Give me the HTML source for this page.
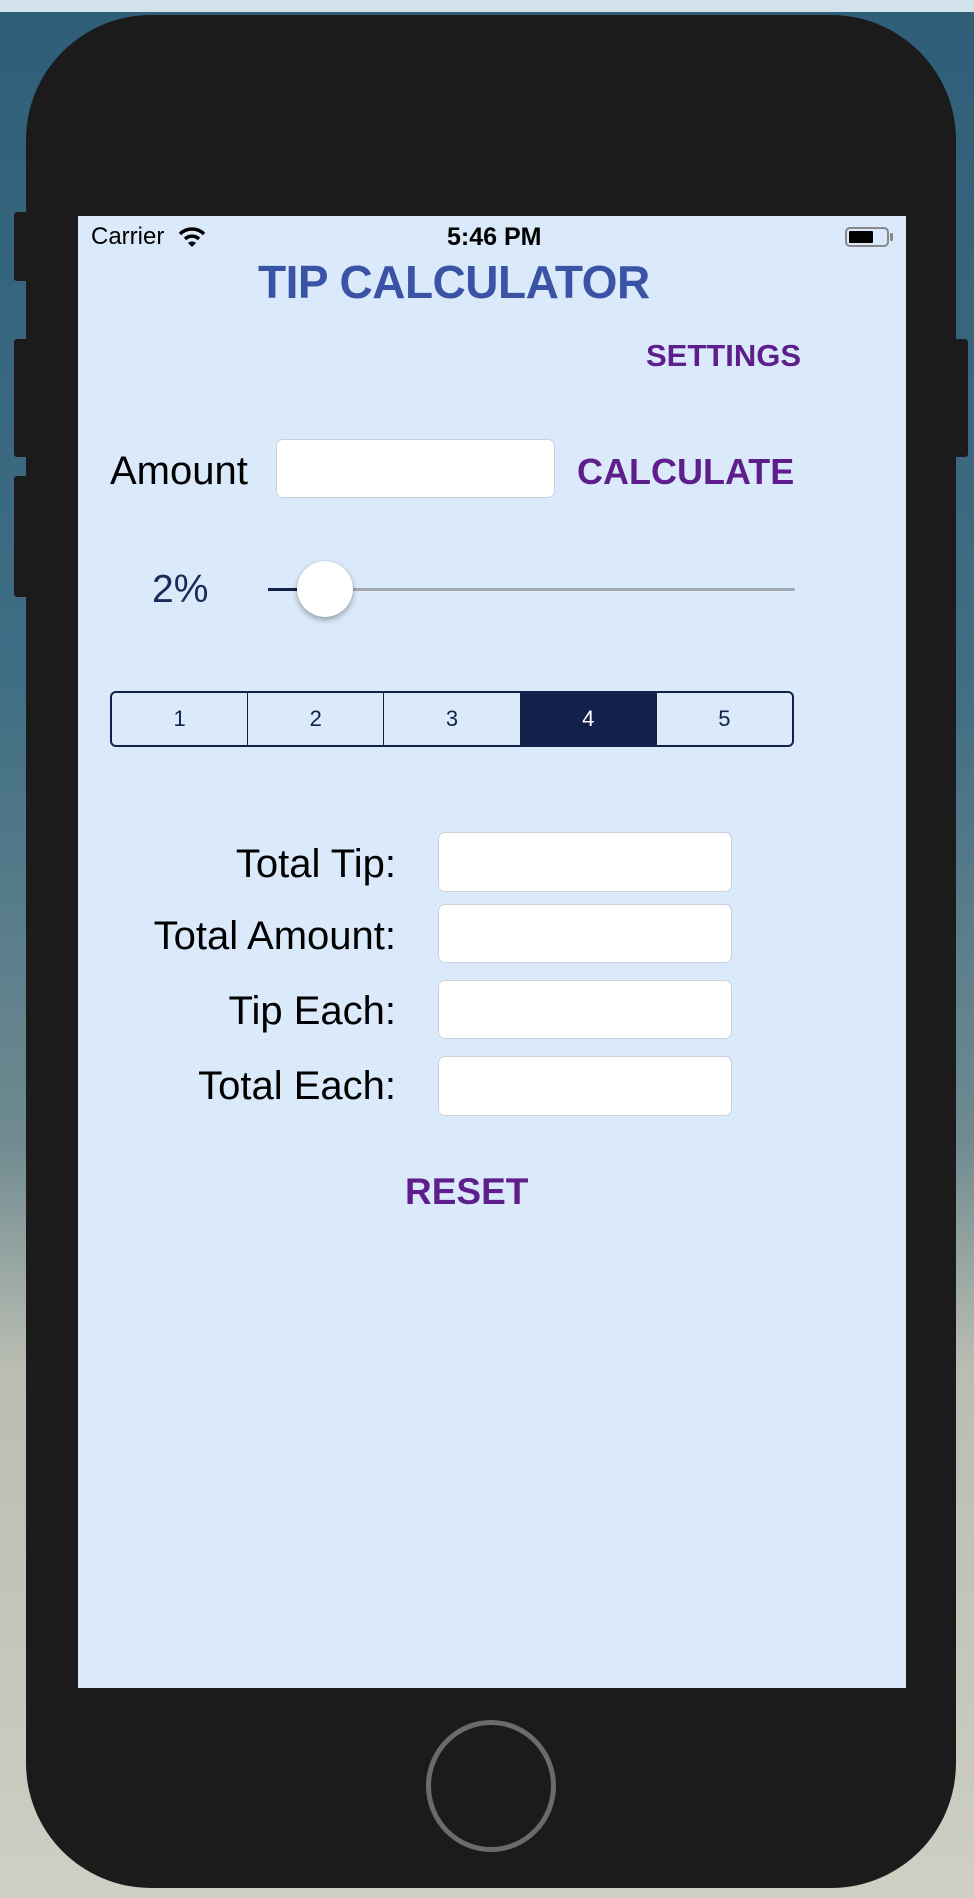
<!DOCTYPE html>
<html><head><meta charset="utf-8"><style>
*{margin:0;padding:0;box-sizing:border-box}
body{width:974px;height:1898px;position:relative;overflow:hidden;font-family:"Liberation Sans",sans-serif;
background:linear-gradient(180deg,#2f5f78 0%,#3e6d84 35%,#6f8a90 60%,#b9bdb2 72%,#cfcfc4 100%)}
.strip{position:absolute;left:0;top:0;width:974px;height:12px;background:#d2e2ea}
.phone{position:absolute;left:26px;top:15px;width:930px;height:1873px;background:#1b1b1b;border-radius:125px}
.btn{position:absolute;background:#1b1b1b;border-radius:3px}
.screen{position:absolute;left:78px;top:216px;width:828px;height:1472px;background:#daeafa}
.t{position:absolute;white-space:nowrap;line-height:1}
.field{position:absolute;background:#fff;border:1px solid #c9d2dc;border-radius:7px}
.lbl{position:absolute;right:510px;font-size:40px;color:#000;line-height:1;white-space:nowrap}
.seg{position:absolute;left:32px;top:475px;width:684px;height:56px;border:2px solid #13214a;border-radius:6px;display:flex;overflow:hidden}
.seg div{flex:1;border-right:1.5px solid #13214a;display:flex;align-items:center;justify-content:center;font-size:22px;color:#13214a}
.seg div:last-child{border-right:none}
.seg .on{background:#13214a;color:#fff}
</style></head><body>
<div class="strip"></div>
<div class="btn" style="left:14px;top:212px;width:14px;height:69px"></div>
<div class="btn" style="left:14px;top:339px;width:14px;height:118px"></div>
<div class="btn" style="left:14px;top:476px;width:14px;height:121px"></div>
<div class="btn" style="left:954px;top:339px;width:14px;height:118px"></div>
<div class="phone"></div>
<div style="position:absolute;left:426px;top:1720px;width:130px;height:132px;border:5px solid #6b6b6b;border-radius:50%"></div>
<div class="screen">
  <div class="t" style="left:13px;top:9px;font-size:24px;color:#000">Carrier</div>
  <svg style="position:absolute;left:100px;top:10px" width="28" height="22" viewBox="0 0 28 22"><path d="M2 8 A17 17 0 0 1 26 8" stroke="#000" stroke-width="3.5" fill="none"/><path d="M7 13 A10 10 0 0 1 21 13" stroke="#000" stroke-width="3.5" fill="none"/><path d="M10 17 L14 21 L18 17 A6 6 0 0 0 10 17Z" fill="#000"/></svg>
  <div class="t" style="left:369px;top:9px;font-size:25px;font-weight:bold;color:#000">5:46 PM</div>
  <div style="position:absolute;left:767px;top:11px;width:44px;height:20px;border:2px solid #888;border-radius:5px;padding:2px"><div style="width:24px;height:12px;background:#000;border-radius:1px"></div></div>
  <div style="position:absolute;left:812px;top:17px;width:3px;height:8px;background:#888;border-radius:1px"></div>
  <div class="t" style="left:180px;top:43px;font-size:46px;font-weight:bold;color:#3a53a4;letter-spacing:-0.5px">TIP CALCULATOR</div>
  <div class="t" style="left:568px;top:124px;font-size:31px;font-weight:bold;color:#5e1f8c">SETTINGS</div>
  <div class="t" style="left:32px;top:235px;font-size:40px;color:#000">Amount</div>
  <div class="field" style="left:198px;top:223px;width:279px;height:59px"></div>
  <div class="t" style="left:499px;top:238px;font-size:36px;font-weight:bold;color:#5e1f8c">CALCULATE</div>
  <div class="t" style="left:74px;top:354px;font-size:39px;color:#1a2a5a">2%</div>
  <div style="position:absolute;left:190px;top:372px;width:527px;height:3px;background:#a4a8b0;border-radius:2px"></div>
  <div style="position:absolute;left:190px;top:372px;width:58px;height:3px;background:#13214a"></div>
  <div style="position:absolute;left:219px;top:345px;width:56px;height:56px;border-radius:50%;background:#fff;box-shadow:0 3px 6px rgba(0,0,0,.3),0 0 1px rgba(0,0,0,.3)"></div>
  <div class="seg"><div>1</div><div>2</div><div>3</div><div class="on">4</div><div>5</div></div>
  <div class="lbl" style="top:628px">Total Tip:</div>
  <div class="lbl" style="top:700px">Total Amount:</div>
  <div class="lbl" style="top:775px">Tip Each:</div>
  <div class="lbl" style="top:850px">Total Each:</div>
  <div class="field" style="left:360px;top:616px;width:294px;height:60px"></div>
  <div class="field" style="left:360px;top:688px;width:294px;height:59px"></div>
  <div class="field" style="left:360px;top:764px;width:294px;height:59px"></div>
  <div class="field" style="left:360px;top:840px;width:294px;height:60px"></div>
  <div class="t" style="left:327px;top:957px;font-size:37px;font-weight:bold;color:#5e1f8c">RESET</div>
</div>
</body></html>
